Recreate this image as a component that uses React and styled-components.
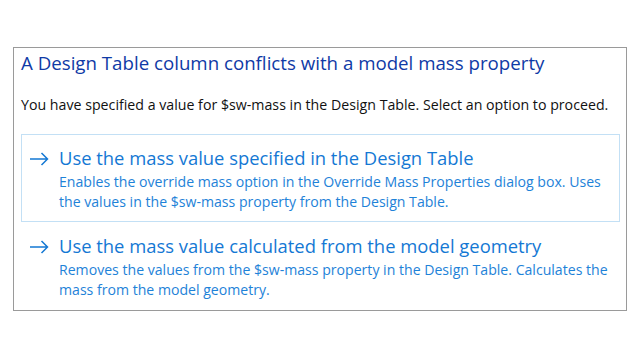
import React from "react";
import styled, { createGlobalStyle } from "styled-components";

const Global = createGlobalStyle`
  html, body { margin: 0; padding: 0; background: #ffffff; }
  body { font-family: "Open Sans", "Noto Sans", sans-serif; }
`;

const Page = styled.div`
  padding: 47px 0 0 13px;
`;

const Panel = styled.section`
  box-sizing: border-box;
  width: 614px;
  height: 264px;
  border: 1px solid #9a9a9a;
  padding: 2px 6px 0 7px;
  display: flex;
  flex-direction: column;
`;

const Title = styled.h1`
  margin: 0;
  font-weight: 400;
  font-size: 18.7px;
  line-height: 26px;
  color: #0f3aa6;
`;

const Intro = styled.p`
  margin: 19px 0 0 0;
  font-size: 14.2px;
  line-height: 20px;
  color: #111111;
`;

const Option = styled.button`
  box-sizing: border-box;
  margin-top: ${(p) => p.$gap}px;
  height: 88px;
  width: 100%;
  display: grid;
  grid-template-columns: 30px 1fr;
  align-content: start;
  padding: 11px 6px 0 7px;
  text-align: left;
  background: transparent;
  border: 1px solid ${(p) => (p.$focused ? "#c3e0f5" : "transparent")};
  font-family: inherit;
  cursor: pointer;
`;

const Arrow = styled.svg`
  width: 20px;
  height: 14px;
  margin-top: 6px;
  color: #1478d4;
`;

const Text = styled.div`
  display: flex;
  flex-direction: column;
`;

const OptionTitle = styled.span`
  font-size: 18.4px;
  line-height: 24px;
  color: #1478d4;
`;

const OptionDesc = styled.span`
  margin-top: 1.6px;
  font-size: 14.1px;
  line-height: 20px;
  color: #1e82d8;
`;

const ArrowIcon = () => (
  <Arrow viewBox="0 0 20 14" fill="none">
    <path d="M1 7 H18.5 M12.5 1 L18.5 7 L12.5 13" stroke="currentColor" strokeWidth="1.5" />
  </Arrow>
);

const options = [
  {
    title: "Use the mass value specified in the Design Table",
    desc: "Enables the override mass option in the Override Mass Properties dialog box. Uses the values in the $sw-mass property from the Design Table.",
    focused: true,
    gap: 19,
  },
  {
    title: "Use the mass value calculated from the model geometry",
    desc: "Removes the values from the $sw-mass property in the Design Table. Calculates the mass from the model geometry.",
    focused: false,
    gap: 0,
  },
];

export default function App() {
  return (
    <>
      <Global />
      <Page>
        <Panel>
          <Title>A Design Table column conflicts with a model mass property</Title>
          <Intro>
            You have specified a value for $sw-mass in the Design Table. Select an option to proceed.
          </Intro>
          {options.map((o) => (
            <Option key={o.title} $focused={o.focused} $gap={o.gap}>
              <ArrowIcon />
              <Text>
                <OptionTitle>{o.title}</OptionTitle>
                <OptionDesc>{o.desc}</OptionDesc>
              </Text>
            </Option>
          ))}
        </Panel>
      </Page>
    </>
  );
}
